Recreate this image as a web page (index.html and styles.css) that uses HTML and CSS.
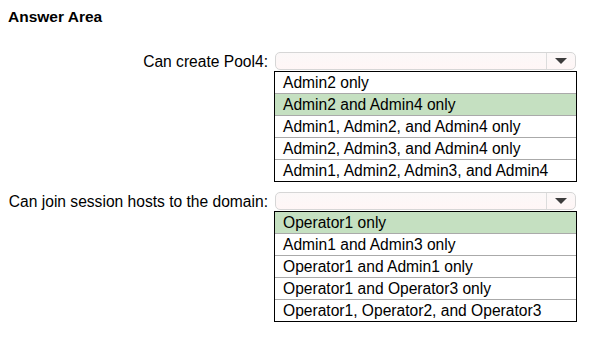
FILE: index.html
```html
<!DOCTYPE html>
<html lang="en">
<head>
  <meta charset="UTF-8">
  <title>Answer Area</title>
  <link rel="stylesheet" href="styles.css">
</head>
<body>
  <h1>Answer Area</h1>

  <div class="question">
    <div class="label">Can create Pool4:</div>
    <div class="answer">
      <div class="select">
        <span class="arrow"></span>
      </div>
      <ul class="options">
        <li>Admin2 only</li>
        <li class="picked">Admin2 and Admin4 only</li>
        <li>Admin1, Admin2, and Admin4 only</li>
        <li>Admin2, Admin3, and Admin4 only</li>
        <li>Admin1, Admin2, Admin3, and Admin4</li>
      </ul>
    </div>
  </div>

  <div class="question">
    <div class="label">Can join session hosts to the domain:</div>
    <div class="answer">
      <div class="select">
        <span class="arrow"></span>
      </div>
      <ul class="options">
        <li class="picked">Operator1 only</li>
        <li>Admin1 and Admin3 only</li>
        <li>Operator1 and Admin1 only</li>
        <li>Operator1 and Operator3 only</li>
        <li>Operator1, Operator2, and Operator3</li>
      </ul>
    </div>
  </div>
</body>
</html>
```

FILE: styles.css
```css
body {
  font-family: "Liberation Sans", Arial, sans-serif;
  font-size: 15.6px;
  color: #000;
  background: #fff;
  margin: 0;
  padding: 8px 0 0 8px;
}
h1 {
  font-size: 15.5px;
  font-weight: bold;
  margin: 0 0 26px 0;
  line-height: 18px;
}
.question {
  display: flex;
  margin-bottom: 10px;
}
.label {
  width: 260px;
  text-align: right;
  padding-top: 1px;
  line-height: 17px;
}
.answer {
  margin-left: 6px;
  width: 303px;
}
.select {
  height: 16px;
  margin: 0 1px 1px 1px;
  border: 1px solid #d6d6d6;
  border-radius: 5px;
  background: linear-gradient(#fbf8f8, #fff6f6);
  position: relative;
}
.arrow {
  position: absolute;
  right: 0;
  top: 0;
  width: 28px;
  height: 16px;
  border-left: 1px solid #dcdcdc;
}
.arrow::after {
  content: "";
  position: absolute;
  left: 8px;
  top: 5px;
  border-left: 6px solid transparent;
  border-right: 6px solid transparent;
  border-top: 6px solid #3c3c3c;
}
.options {
  list-style: none;
  margin: 0;
  padding: 0;
  border: 1px solid #000;
}
.options li {
  height: 21px;
  line-height: 21px;
  padding-left: 8px;
  border-top: 1px solid #aaa;
}
.options li:first-child {
  border-top: none;
}
.options li.picked {
  background: #c5e0c1;
}
```
